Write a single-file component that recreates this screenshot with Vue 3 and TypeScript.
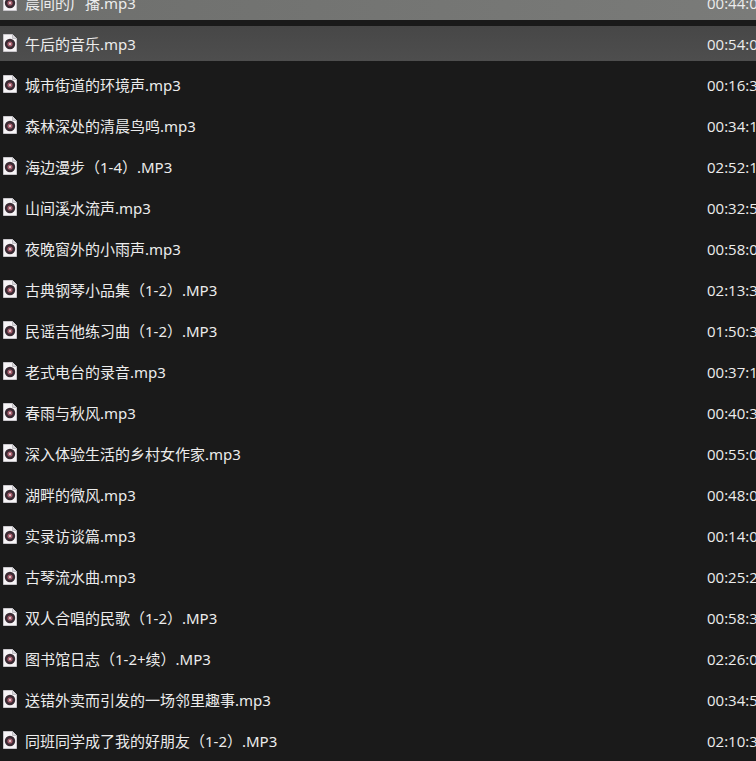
<script setup lang="ts">
interface Track {
  name: string
  time: string
  state?: 'selected' | 'hover'
}

const tracks: Track[] = [
  { name: '晨间的广播.mp3', time: '00:44:08', state: 'selected' },
  { name: '午后的音乐.mp3', time: '00:54:02', state: 'hover' },
  { name: '城市街道的环境声.mp3', time: '00:16:34' },
  { name: '森林深处的清晨鸟鸣.mp3', time: '00:34:17' },
  { name: '海边漫步（1-4）.MP3', time: '02:52:12' },
  { name: '山间溪水流声.mp3', time: '00:32:55' },
  { name: '夜晚窗外的小雨声.mp3', time: '00:58:03' },
  { name: '古典钢琴小品集（1-2）.MP3', time: '02:13:36' },
  { name: '民谣吉他练习曲（1-2）.MP3', time: '01:50:33' },
  { name: '老式电台的录音.mp3', time: '00:37:14' },
  { name: '春雨与秋风.mp3', time: '00:40:38' },
  { name: '深入体验生活的乡村女作家.mp3', time: '00:55:04' },
  { name: '湖畔的微风.mp3', time: '00:48:07' },
  { name: '实录访谈篇.mp3', time: '00:14:06' },
  { name: '古琴流水曲.mp3', time: '00:25:29' },
  { name: '双人合唱的民歌（1-2）.MP3', time: '00:58:37' },
  { name: '图书馆日志（1-2+续）.MP3', time: '02:26:05' },
  { name: '送错外卖而引发的一场邻里趣事.mp3', time: '00:34:51' },
  { name: '同班同学成了我的好朋友（1-2）.MP3', time: '02:10:38' },
]
</script>

<template>
  <div class="list">
    <div v-for="t in tracks" :key="t.name" class="row" :class="t.state">
      <svg class="icon" width="14" height="18" viewBox="0 0 14 18">
        <path d="M0.5 0.5H9.5L13.5 4.5V17.5H0.5Z" fill="#f6f4f6" stroke="#c9c6cb" />
        <path d="M9.5 0.5V4.5H13.5" fill="#d8d5da" stroke="#b5b2b8" stroke-width="0.8" />
        <circle cx="7" cy="10" r="5.2" fill="#3a2a33" />
        <circle cx="7" cy="10" r="2.6" fill="#a8606f" />
        <circle cx="7" cy="10" r="1" fill="#f1e4e4" />
      </svg>
      <span class="name">{{ t.name }}</span>
      <span class="time">{{ t.time }}</span>
    </div>
  </div>
</template>

<style>
html,
body {
  margin: 0;
  height: 100%;
  overflow: hidden;
  background: #1a1a1a;
}
</style>

<style scoped>
.list {
  display: flex;
  flex-direction: column;
  gap: 6px;
  width: 756px;
  height: 776px;
  margin-top: -15px;
  overflow: hidden;
  background: #1a1a1a;
  font-family: "Noto Sans", "Noto Sans CJK SC", sans-serif;
  font-size: 15px;
  color: #ececec;
}

.row {
  display: flex;
  flex: none;
  align-items: center;
  height: 35px;
  padding-left: 3px;
  white-space: nowrap;
}

.row.selected {
  background: linear-gradient(90deg, #6e6f6d, #7a7b79);
}

.row.hover {
  background: linear-gradient(180deg, #474747, #4e4e4e);
}

.icon {
  flex: none;
  margin-top: -2px;
}

.name {
  flex: none;
  width: 682px;
  margin-left: 8px;
  line-height: 20px;
}

.time {
  flex: none;
  font-family: "Open Sans", sans-serif;
}
</style>
